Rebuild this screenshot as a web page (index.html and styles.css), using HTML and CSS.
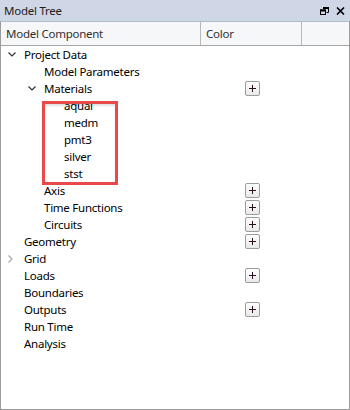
FILE: index.html
```html
<!DOCTYPE html>
<html lang="en">
<head>
  <meta charset="UTF-8">
  <title>Model Tree</title>
  <link rel="stylesheet" href="styles.css">
</head>
<body>
  <div class="panel">
    <div class="titlebar">
      <span class="title">Model Tree</span>
      <span class="tools">
        <svg width="9" height="8" viewBox="0 0 9 8">
          <path d="M3 0.5h5.5v5h-2" fill="none" stroke="#000" stroke-width="1"/>
          <rect x="3" y="0" width="6" height="2" fill="#000"/>
          <rect x="0.5" y="3" width="5" height="4.5" fill="none" stroke="#000" stroke-width="1"/>
          <rect x="0" y="2.5" width="6" height="2" fill="#000"/>
        </svg>
        <svg width="9" height="8" viewBox="0 0 9 8">
          <path d="M1 0.5l7 7M8 0.5l-7 7" stroke="#000" stroke-width="1.6"/>
        </svg>
      </span>
    </div>

    <div class="tree">
      <div class="head">
        <div class="hcell name-col">Model Component</div>
        <div class="hcell color-col">Color</div>
        <div class="hcell rest"></div>
      </div>

      <div class="rows">
        <div class="row lvl0"><span class="tog"><svg width="8" height="5" viewBox="0 0 8 5"><path d="M0.5 0.5l3.5 3.5 3.5-3.5" fill="none" stroke="#333" stroke-width="1.2"/></svg></span>Project Data</div>
        <div class="row lvl1"><span class="tog"></span>Model Parameters</div>
        <div class="row lvl1"><span class="tog"><svg width="8" height="5" viewBox="0 0 8 5"><path d="M0.5 0.5l3.5 3.5 3.5-3.5" fill="none" stroke="#333" stroke-width="1.2"/></svg></span>Materials<span class="plus"></span></div>
        <div class="row lvl2"><span class="tog"></span>aqual</div>
        <div class="row lvl2"><span class="tog"></span>medm</div>
        <div class="row lvl2"><span class="tog"></span>pmt3</div>
        <div class="row lvl2"><span class="tog"></span>silver</div>
        <div class="row lvl2"><span class="tog"></span>stst</div>
        <div class="row lvl1"><span class="tog"></span>Axis<span class="plus"></span></div>
        <div class="row lvl1"><span class="tog"></span>Time Functions<span class="plus"></span></div>
        <div class="row lvl1"><span class="tog"></span>Circuits<span class="plus"></span></div>
        <div class="row lvl0"><span class="tog"></span>Geometry<span class="plus"></span></div>
        <div class="row lvl0"><span class="tog"><svg width="5" height="8" viewBox="0 0 5 8"><path d="M0.5 0.5l3.5 3.5-3.5 3.5" fill="none" stroke="#a8a8a8" stroke-width="1.2"/></svg></span>Grid</div>
        <div class="row lvl0"><span class="tog"></span>Loads<span class="plus"></span></div>
        <div class="row lvl0"><span class="tog"></span>Boundaries</div>
        <div class="row lvl0"><span class="tog"></span>Outputs<span class="plus"></span></div>
        <div class="row lvl0"><span class="tog"></span>Run Time</div>
        <div class="row lvl0"><span class="tog"></span>Analysis</div>

        <div class="highlight"></div>
      </div>
    </div>
  </div>
</body>
</html>
```

FILE: styles.css
```css
body {
  margin: 0;
  font-family: "Noto Sans", "Open Sans", sans-serif;
  font-size: 11.5px;
  letter-spacing: -0.25px;
  color: #000;
  background: #fff;
}
.panel {
  width: 350px;
  height: 410px;
  display: flex;
  flex-direction: column;
}
.titlebar {
  height: 21px;
  background: #cfd6e5;
  display: flex;
  align-items: center;
  justify-content: space-between;
  padding: 0 4px 0 4px;
  color: #1e1e1e;
}
.tools {
  display: flex;
  gap: 7px;
  align-items: center;
  padding-right: 1px;
}
.tools svg {
  display: block;
}
.tree {
  flex: 1;
  border: 1px solid #9b9b9b;
  border-top: 1px solid #b4bccc;
  background: #fff;
  display: flex;
  flex-direction: column;
}
.head {
  display: flex;
  height: 23px;
  background: #f6f7f8;
  border-bottom: 1px solid #a6a6a6;
  color: #303030;
}
.hcell {
  display: flex;
  align-items: center;
  padding-left: 5px;
  box-sizing: border-box;
}
.name-col {
  width: 200px;
  border-right: 1px solid #b8b8b8;
}
.color-col {
  width: 101px;
  border-right: 1px solid #b8b8b8;
}
.rest {
  flex: 1;
}
.rows {
  position: relative;
}
.row {
  height: 17px;
  display: flex;
  align-items: center;
  white-space: nowrap;
  position: relative;
}
.tog {
  width: 20px;
  display: flex;
  align-items: center;
  padding-left: 4px;
  box-sizing: border-box;
}
.tog svg {
  display: block;
}
.lvl0 { padding-left: 3px; }
.lvl1 { padding-left: 23px; }
.lvl2 { padding-left: 43px; }

.plus {
  position: absolute;
  left: 244px;
  top: 1px;
  width: 13px;
  height: 13px;
  border: 1px solid #9c9c9c;
  border-radius: 2px;
  background: linear-gradient(#fefefe, #e9e9e9);
}
.plus::before,
.plus::after {
  content: "";
  position: absolute;
  background: #2a1020;
}
.plus::before {
  left: 3px;
  top: 6px;
  width: 7px;
  height: 1px;
}
.plus::after {
  left: 6px;
  top: 3px;
  width: 1px;
  height: 7px;
}
.highlight {
  position: absolute;
  left: 41px;
  top: 55px;
  width: 70px;
  height: 78px;
  border: 3px solid #e84a4c;
  box-shadow: inset 0 2px 2px rgba(0, 0, 0, 0.12);
}
```
